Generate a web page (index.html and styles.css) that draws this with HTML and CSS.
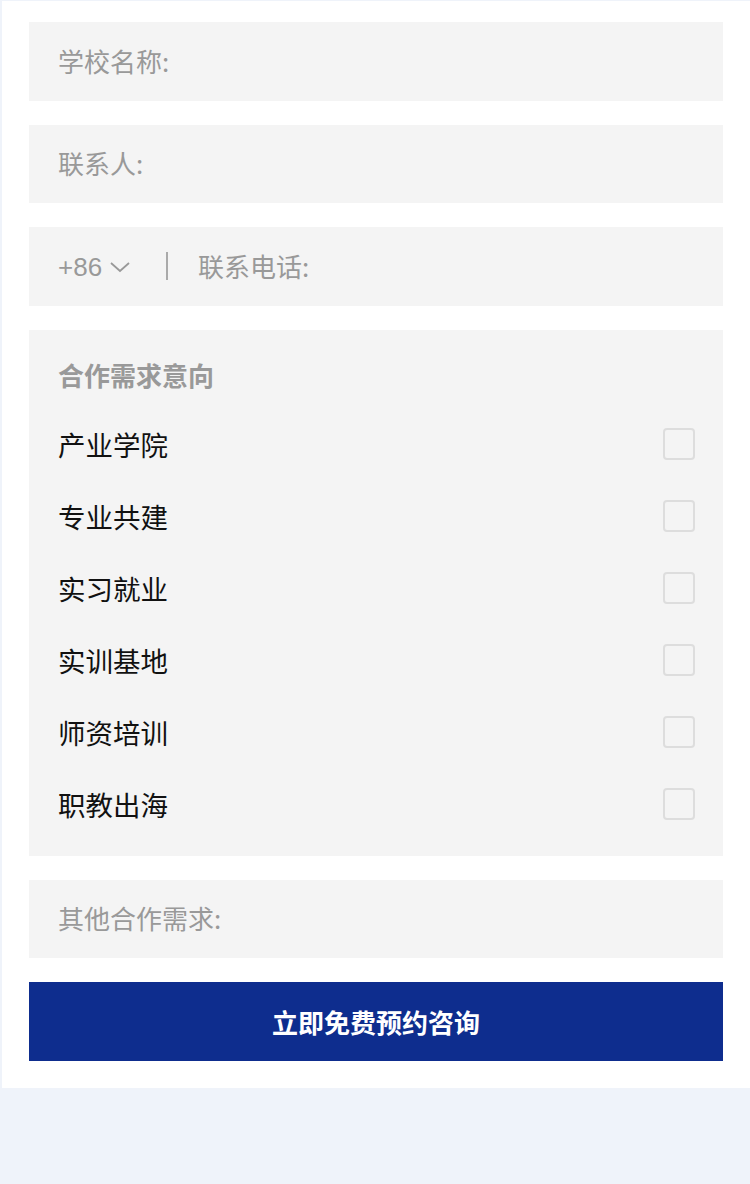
FILE: index.html
```html
<!DOCTYPE html>
<html lang="zh-CN">
<head>
  <meta charset="UTF-8" />
  <meta name="viewport" content="width=device-width, initial-scale=1.0"/>
  <title>合作咨询</title>
  <link rel="stylesheet" href="styles.css">
</head>
<body>
  <form class="card">
    <div class="field"><span class="placeholder">学校名称:</span></div>
    <div class="field"><span class="placeholder">联系人:</span></div>

    <div class="field phone">
      <span class="code">+86
        <svg class="chevron" width="22" height="14" viewBox="0 0 22 14">
          <path d="M2 3 L11 11 L20 3" fill="none" stroke="#999" stroke-width="1.8"/>
        </svg>
      </span>
      <span class="divider"></span>
      <span class="placeholder">联系电话:</span>
    </div>

    <div class="group">
      <div class="group-title">合作需求意向</div>
      <label class="option"><span>产业学院</span><span class="box"></span></label>
      <label class="option"><span>专业共建</span><span class="box"></span></label>
      <label class="option"><span>实习就业</span><span class="box"></span></label>
      <label class="option"><span>实训基地</span><span class="box"></span></label>
      <label class="option"><span>师资培训</span><span class="box"></span></label>
      <label class="option"><span>职教出海</span><span class="box"></span></label>
    </div>

    <div class="field"><span class="placeholder">其他合作需求:</span></div>

    <button type="button" class="submit">立即免费预约咨询</button>
  </form>
</body>
</html>
```

FILE: styles.css
```css
body {
  margin: 0;
  height: 1184px;
  background: #eff3fa;
  font-family: "Noto Sans CJK SC", "Noto Sans", sans-serif;
}

.card {
  margin: 1px 0 0 2px;
  padding: 21px 27px 27px 27px;
  background: #fff;
  display: flex;
  flex-direction: column;
  gap: 24px;
}

.field {
  height: 78.5px;
  background: #f4f4f4;
  display: flex;
  align-items: center;
  padding: 0 29px;
  font-size: 26px;
}

.placeholder {
  color: #999;
  margin-top: -2px;
}

.phone .code {
  display: flex;
  align-items: center;
  gap: 7px;
  color: #999;
  font-family: "Liberation Sans", sans-serif;
  margin-top: 2px;
}

.chevron {
  margin-top: -1px;
}

.divider {
  width: 2px;
  height: 28px;
  background: #aaa;
  margin: 0 30px 0 35px;
}

.group {
  background: #f4f4f4;
  padding: 28px 28px 16px 29px;
}

.group-title {
  font-size: 26px;
  line-height: 34px;
  font-weight: 700;
  color: #999;
  margin-bottom: 16px;
}

.option {
  height: 72px;
  display: flex;
  align-items: center;
  justify-content: space-between;
  font-size: 27.5px;
  color: #111;
}

.box {
  width: 28px;
  height: 28px;
  border: 2px solid #ddd;
  border-radius: 4px;
}

.submit {
  height: 78.5px;
  border: 0;
  background: #0e2d8e;
  color: #fff;
  font-family: inherit;
  font-size: 26px;
  font-weight: 700;
}
```
